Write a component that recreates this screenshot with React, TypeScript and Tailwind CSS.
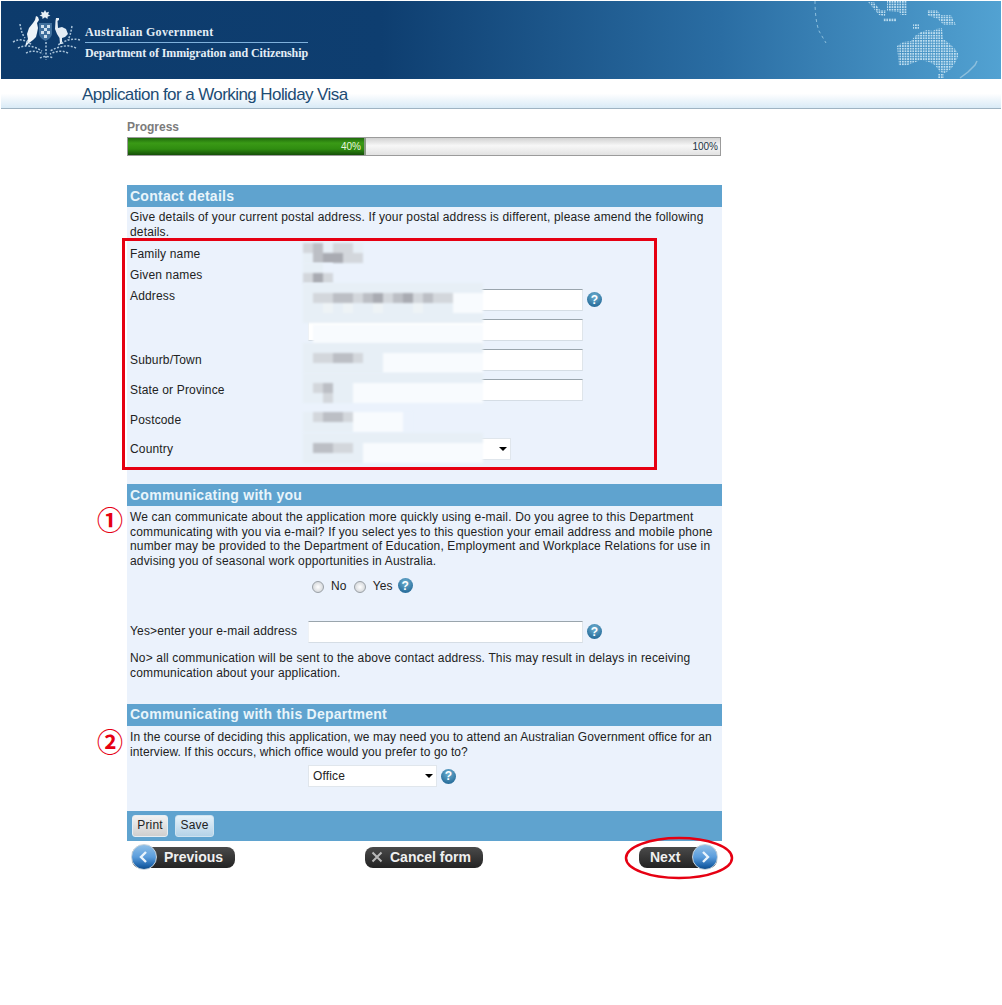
import React from 'react';

const sans = "font-['Liberation_Sans',Arial,sans-serif]";

const L = '#e7eff6';
const W = '#f8fbfe';
const A = '#d3d7dc';
const B = '#bcbfc5';
const C = '#a9abb2';
const P = '#ebf2fc';

const Mosaic = ({ className, rows }: { className: string; rows: string[][] }) => (
  <div className={`absolute blur-[1px] ${className}`}>
    {rows.map((row, i) => (
      <div key={i} className="flex h-[10px]">
        {row.map((color, j) => (
          <div key={j} className="h-[10px] w-[10px]" style={{ background: color }} />
        ))}
      </div>
    ))}
  </div>
);

const repeat = (color: string, n: number) => Array.from({ length: n }, () => color);

const HelpIcon = ({ className = '' }: { className?: string }) => (
  <span
    className={`flex h-[15px] w-[15px] shrink-0 items-center justify-center rounded-full bg-[radial-gradient(circle_at_50%_30%,#6fb1d2,#2a6f9c_75%)] text-[12px] leading-none font-bold tracking-normal text-white ${className}`}
  >
    ?
  </span>
);

const TextInput = ({ className = '' }: { className?: string }) => (
  <div className={`h-[22px] w-[275px] border border-t-[#9aa5ad] border-r-[#dfe5ea] border-b-[#d5dde5] border-l-[#eef2f6] bg-white ${className}`} />
);

const SectionHeader = ({ children }: { children: React.ReactNode }) => (
  <div className="flex h-[22px] items-center bg-[#5fa3cf] pl-[3px] text-[14px] font-bold tracking-[0.26px] text-[#e9f5fb]">
    {children}
  </div>
);

const Radio = () => (
  <span className="h-[12px] w-[12px] rounded-full border border-[#9aa0a6] bg-[radial-gradient(circle,#ffffff,#c8ccd0)]" />
);

const Arrow = ({ dir }: { dir: 'left' | 'right' }) => (
  <span className="absolute top-[-3px] flex h-[26px] w-[26px] items-center justify-center rounded-full border border-[#c5d2dc] bg-[linear-gradient(180deg,#8fc0e8_0%,#5b9ddc_50%,#1f66ad_85%,#0e4c8c_100%)] data-[left=true]:left-[-1px] data-[left=false]:right-[-1px]" data-left={dir === 'left'}>
    <svg width="14" height="14" viewBox="0 0 14 14" fill="none" stroke="#e9f4fc" strokeWidth="2.4">
      <path d={dir === 'left' ? 'M9 2 L4 7 L9 12' : 'M5 2 L10 7 L5 12'} />
    </svg>
  </span>
);

const Crest = () => (
  <svg width="70" height="54" viewBox="0 0 70 54" className="absolute top-[9px] left-[11px]">
    {/* star */}
    <path d="M33 0 l1.300 2.500 2.700-.8 -.9 2.700 2.400 1.400 -2.800.6 -.2 2.700 -2.500-1.800 -2.500 1.800 -.2-2.700 -2.800-.6 2.400-1.400 -.9-2.700 2.700.8z" fill="#e8f0f6" />
    {/* kangaroo */}
    <path d="M24 6 L26 7 L27 10 L25 13 L26 18 L25 23 L24 27 L21 30 L17 33 L13 37 L14 33 L16 29 L15 24 L17 18 L21 13 L23 10 Z" fill="#eef4f9" />
    {/* emu */}
    <path d="M44 8 L47 8 L47 10 L45.500 11 L46 18 L50 17 L54 19 L56 24 L53 27 L50 28 L50 33 L52 34 L48 34 L47.500 28 L45 24 L43 19 L43.500 11 Z" fill="#e3ecf4" />
    {/* shield */}
    <path d="M27 13 h13 v10 c0 4 -3 6 -6.500 8 c-3.500-2 -6.500-4 -6.500-8z" fill="#3f6f9c" />
    <path d="M29 15 h3 v3 h-3z M35 15 h3 v3 h-3z M29 21 h3 v3 h-3z M35 21 h3 v3 h-3z M32 18 h3 v3 h-3z M32 25 h3 v3 h-3z" fill="#cfe0ee" />
    {/* wreath */}
    <g fill="none" stroke="#a9c3d9" strokeWidth="1.500" strokeDasharray="2 1.500">
      <path d="M1 32 C8 28 14 30 20 35" />
      <path d="M68 30 C60 28 54 30 46 35" />
      <path d="M6 38 C14 34 22 36 30 41" />
      <path d="M64 38 C56 34 48 36 38 41" />
      <path d="M14 43 C20 40 26 41 31 44" />
      <path d="M56 43 C50 40 44 41 38 44" />
      <path d="M8 14 C9 20 10 24 13 28" />
      <path d="M60 16 C59 22 58 26 56 30" />
      <path d="M34 32 L34 50" />
      <path d="M28 48 C31 46 38 46 41 48" />
    </g>
  </svg>
);

const DottedMap = () => (
  <svg width="190" height="78" viewBox="0 0 190 78" className="absolute top-0 right-0">
    <defs>
      <pattern id="dots" width="2.600" height="2.600" patternUnits="userSpaceOnUse">
        <rect width="1.700" height="1.700" fill="#c2e0f1" />
      </pattern>
      <clipPath id="land">
        <path d="M86 45 L92 41 L100 40 L104 35 L110 31 L116 29 L122 30 L125 28 L131 27 L132 38 L138 42 L144 48 L147 52 L147 56 L144 62 L140 68 L134 72 L129 71 L124 64 L118 61 L110 59 L102 62 L94 65 L88 65 Z" />
        <path d="M127 73 h6 v4 h-6z" />
      </clipPath>
    </defs>
    <rect x="80" y="24" width="75" height="54" fill="url(#dots)" clipPath="url(#land)" />
    <g fill="url(#dots)">
      <path d="M57 1 h6 l6 8 h6 l-1 6 -6 -1 -5 -6z" />
      <path d="M76 0 h20 v14 h-6 l-2-3 -12 -1z" />
      <path d="M72 17 h13 v4 h-13z" />
      <path d="M116 9 h10 l4 5 h10 l5 10 -12 0 -6-6 -11-4z" />
      <path d="M102 23 h6 v5 h-6z" />
    </g>
    <g fill="none" stroke="#8dbfdd">
      <path d="M4 0 C4 10 5 22 8 30 L15 42" strokeDasharray="3 3" />
      <path d="M149 77 L157 71 L164 64 L166 60" strokeWidth="1.500" />
    </g>
  </svg>
);

export default function App() {
  return (
    <div className={`relative min-h-[1005px] w-[1002px] bg-white pt-px text-[12px] leading-[15px] tracking-[0.155px] text-[#222] ${sans}`}>
      {/* Banner */}
      <header className="relative ml-px h-[78px] w-[1000px] overflow-hidden bg-[linear-gradient(90deg,#0d3b6c_0%,#0e3e70_38%,#2a6da3_72%,#52a2d2_100%)]">
        <Crest />
        <div className="absolute top-[24px] left-[84px] w-[223px] font-['Liberation_Serif',serif] text-[12px] font-bold text-[#e4eef6]">
          <div className="h-[17px] leading-[14px] tracking-[0.3px]">Australian Government</div>
          <div className="h-px bg-[#7fb1dc]" />
          <div className="mt-[3px] whitespace-nowrap leading-[15px] tracking-[-0.09px]">Department of Immigration and Citizenship</div>
        </div>
        <DottedMap />
      </header>
      <div className="ml-px flex h-[30px] w-[1000px] items-center border-b border-[#9fb3c2] bg-[linear-gradient(180deg,#ffffff_0%,#ffffff_50%,#d9eaf6_100%)] pt-[2px] pl-[81px] text-[17px] tracking-[-0.58px] text-[#1d4c74]">
        Application for a Working Holiday Visa
      </div>

      <main className="relative ml-[127px] w-[595px]">
        {/* Progress */}
        <div className="mt-[11px] h-[17px] text-[12px] font-bold tracking-normal text-[#7b7b7b]">Progress</div>
        <div className="flex h-[19px] w-[594px] border border-[#9b9b9b] bg-[linear-gradient(180deg,#d2d2d2_0%,#f7f7f7_45%,#e2e2e2_100%)] text-[10px] leading-[17px] tracking-normal">
          <div className="w-[238px] border-r-2 border-[#8a9a84] bg-[linear-gradient(180deg,#1f6c0c_0%,#3a9a16_30%,#2f8c10_65%,#154f08_100%)] pr-[3px] text-right text-[#e6f5dc]">40%</div>
          <div className="flex-1 pr-[2px] text-right text-[#234]">100%</div>
        </div>

        {/* Contact details */}
        <section className="mt-[29px]">
          <SectionHeader>Contact details</SectionHeader>
          <div className="relative bg-[#ebf2fc] pt-[3px] pl-[3px]">
            <p className="h-[34px] w-[590px]">
              Give details of your current postal address. If your postal address is different, please amend the following details.
            </p>
            <div className="grid grid-cols-[178px_1fr]">
              <div className="h-[21px] pt-[3px]">Family name</div>
              <div />
              <div className="h-[21px] pt-[3px]">Given names</div>
              <div />
              <div className="h-[30px] pt-[3px]">Address</div>
              <div className="flex h-[30px] items-start gap-[4px] pt-[3px]">
                <TextInput />
                <HelpIcon className="mt-[3px]" />
              </div>
              <div className="h-[30px]" />
              <div className="h-[30px] pt-[3px]">
                <TextInput />
              </div>
              <div className="h-[30px] pt-[7px]">Suburb/Town</div>
              <div className="h-[30px] pt-[3px]">
                <TextInput />
              </div>
              <div className="h-[30px] pt-[7px]">State or Province</div>
              <div className="h-[30px] pt-[3px]">
                <TextInput />
              </div>
              <div className="h-[30px] pt-[7px]">Postcode</div>
              <div />
              <div className="h-[30px] pt-[6px]">Country</div>
              <div className="h-[30px] pt-[2px]">
                <div className="flex h-[22px] w-[203px] items-center justify-end border border-[#e0e6ec] bg-white pr-[3px]">
                  <span className="h-0 w-0 border-x-[4px] border-t-[4px] border-x-transparent border-t-black" />
                </div>
              </div>
            </div>

            <Mosaic
              className="top-[36px] left-[176px]"
              rows={[
                [A, B, L, A, A, L],
                [L, B, C, C, A, A],
              ]}
            />
            <Mosaic className="top-[56px] left-[176px]" rows={[[L, L, P], [A, C, A]]} />
            <Mosaic
              className="top-[76px] left-[176px]"
              rows={[
                repeat(L, 18),
                [L, A, A, B, B, A, B, C, A, B, C, A, B, A, A, W, W, W],
                [L, L, '#eef3f6', L, '#eef3f6', L, L, '#eef3f6', L, L, L, '#eef3f6', L, L, L, W, W, W],
                repeat(L, 18),
              ]}
            />
            <Mosaic
              className="top-[118px] left-[186px]"
              rows={[repeat(W, 17), repeat(W, 17)]}
            />
            <Mosaic
              className="top-[136px] left-[176px]"
              rows={[
                repeat(L, 18),
                [L, A, A, B, B, A, L, L, W, W, W, W, W, W, W, W, W, W],
                [L, L, L, L, L, L, L, L, W, W, W, W, W, W, W, W, W, W],
              ]}
            />
            <Mosaic
              className="top-[166px] left-[176px]"
              rows={[
                repeat(L, 18),
                [L, A, B, L, L, W, W, W, W, W, W, W, W, W, W, W, W, W],
                [L, L, A, L, L, W, W, W, W, W, W, W, W, W, W, W, W, W],
              ]}
            />
            <Mosaic
              className="top-[205px] left-[176px]"
              rows={[
                [L, A, B, B, A, W, W, W, W, W, P],
                [L, L, L, L, L, W, W, W, W, W, P],
              ]}
            />
            <Mosaic
              className="top-[226px] left-[176px]"
              rows={[
                repeat(L, 18),
                [L, B, B, A, A, L, W, W, W, W, W, W, W, W, W, W, W, W],
                [L, L, L, L, L, L, W, W, W, W, W, W, W, W, W, W, W, W],
              ]}
            />
            <div className="h-[18px]" />
          </div>
        </section>

        {/* Communicating with you */}
        <section>
          <SectionHeader>Communicating with you</SectionHeader>
          <div className="bg-[#ebf2fc] pt-[4px] pl-[3px]">
            <p className="w-[588px] leading-[14.7px]">
              We can communicate about the application more quickly using e-mail. Do you agree to this Department communicating with you via e-mail? If you select yes to this question your email address and mobile phone number may be provided to the Department of Education, Employment and Workplace Relations for use in advising you of seasonal work opportunities in Australia.
            </p>
            <div className="mt-[10px] flex h-[16px] items-center pl-[182px]">
              <Radio />
              <span className="ml-[7px]">No</span>
              <span className="ml-[7px] flex"><Radio /></span>
              <span className="ml-[7px]">Yes</span>
              <HelpIcon className="mb-[2px] ml-[5px]" />
            </div>
            <div className="mt-[26px] flex h-[22px] items-center">
              <span className="w-[178px]">Yes&gt;enter your e-mail address</span>
              <TextInput />
              <HelpIcon className="ml-[4px]" />
            </div>
            <p className="mt-[8px] h-[53px] w-[588px]">
              No&gt; all communication will be sent to the above contact address. This may result in delays in receiving communication about your application.
            </p>
          </div>
        </section>

        {/* Communicating with this Department */}
        <section>
          <SectionHeader>Communicating with this Department</SectionHeader>
          <div className="h-[85px] bg-[#ebf2fc] pt-[4px] pl-[3px]">
            <p className="w-[590px] leading-[14.7px] tracking-[0.09px]">
              In the course of deciding this application, we may need you to attend an Australian Government office for an interview. If this occurs, which office would you prefer to go to?
            </p>
            <div className="mt-[6px] flex items-center pl-[178px]">
              <div className="flex h-[22px] w-[129px] items-center justify-between border border-[#e0e6ec] bg-white pr-[3px] pl-[4px] text-[#222]">
                Office
                <span className="h-0 w-0 border-x-[4px] border-t-[4px] border-x-transparent border-t-black" />
              </div>
              <HelpIcon className="ml-[4px]" />
            </div>
          </div>
        </section>

        {/* Toolbar */}
        <div className="flex h-[30px] items-center gap-[7px] bg-[#5fa3cf] pl-[5px]">
          <button className="h-[22px] w-[36px] rounded-[3px] border border-[#e7eef3] bg-[linear-gradient(180deg,#f2f2f2,#cfcfcf)] text-[12px] text-[#222]">Print</button>
          <button className="h-[22px] w-[39px] rounded-[3px] border border-[#cfe3f0] bg-[linear-gradient(180deg,#e6f2fa,#b5d3e8)] text-[12px] text-[#222]">Save</button>
        </div>

        {/* Navigation */}
        <nav className="mt-[6px] flex items-center text-[14px] font-bold tracking-normal text-[#f0f0f0]">
          <a className="relative ml-[5px] flex h-[21px] w-[103px] items-center rounded-[8px] bg-[linear-gradient(180deg,#4a4a4a,#232323)] pl-[32px]">
            <Arrow dir="left" />
            Previous
          </a>
          <a className="ml-[130px] flex h-[21px] w-[118px] items-center rounded-[8px] bg-[linear-gradient(180deg,#4a4a4a,#232323)] pl-[6px]">
            <svg width="12" height="12" viewBox="0 0 12 12" stroke="#b9b9b9" strokeWidth="2" className="mr-[7px]">
              <path d="M1.500 1.500 L10.500 10.500 M10.500 1.500 L1.500 10.500" />
            </svg>
            Cancel form
          </a>
          <a className="relative ml-[156px] flex h-[21px] w-[78px] items-center rounded-[8px] bg-[linear-gradient(180deg,#4a4a4a,#232323)] pl-[11px]">
            Next
            <Arrow dir="right" />
          </a>
        </nav>

        {/* Red annotations */}
        <div className="absolute top-[118px] left-[-5px] h-[232px] w-[535px] border-[3px] border-[#e60012]" />
        <span className="absolute top-[384px] left-[-30px] font-['Noto_Sans_CJK_JP',sans-serif] text-[26px] leading-[30px] font-bold tracking-normal text-[#e60012]">①</span>
        <span className="absolute top-[606px] left-[-30px] font-['Noto_Sans_CJK_JP',sans-serif] text-[26px] leading-[30px] font-bold tracking-normal text-[#e60012]">②</span>
        <svg width="110" height="44" viewBox="0 0 110 44" className="absolute top-[716px] left-[497px]" fill="none" stroke="#e60012" strokeWidth="2.500">
          <ellipse cx="55" cy="22" rx="53" ry="20" />
        </svg>
      </main>
    </div>
  );
}
